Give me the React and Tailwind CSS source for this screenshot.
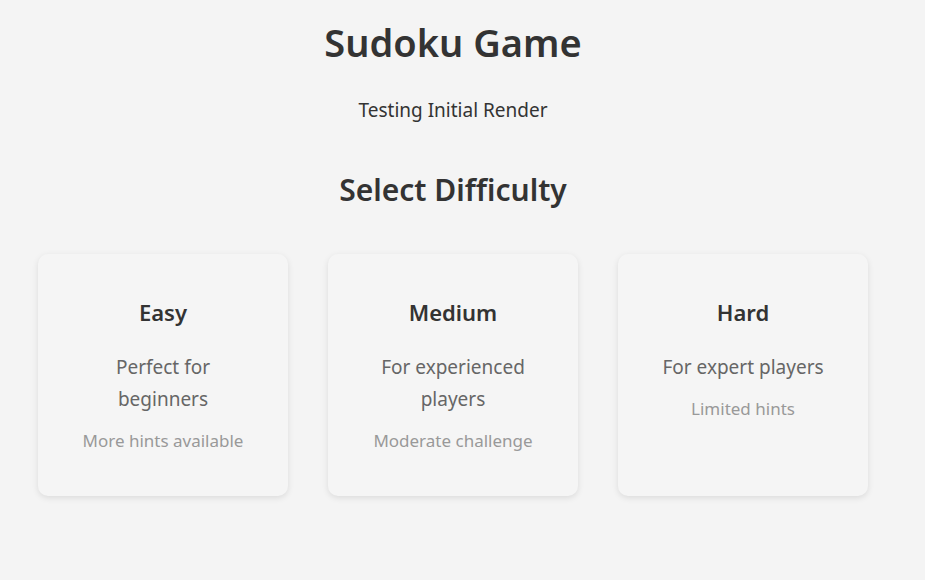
const levels = [
  { name: 'Easy', desc: 'Perfect for beginners', hint: 'More hints available' },
  { name: 'Medium', desc: 'For experienced players', hint: 'Moderate challenge' },
  { name: 'Hard', desc: 'For expert players', hint: 'Limited hints' },
];

const App = () => {
  return (
    <div className="min-h-screen bg-[#f4f4f4] text-[#333] font-['Noto_Sans',sans-serif]">
      <div className="w-[906px] pt-[18px] flex flex-col items-center">
        <h1 className="text-[38px] leading-[48px] font-semibold">Sudoku Game</h1>
        <p className="mt-[30px] text-[19px] leading-[28px]">Testing Initial Render</p>
        <h2 className="mt-[48px] text-[30px] leading-[36px] font-semibold">Select Difficulty</h2>

        <div className="mt-[46px] grid grid-cols-3 gap-[40px]">
          {levels.map((lvl) => (
            <button
              key={lvl.name}
              className="w-[250px] h-[242px] bg-[#f5f5f5] rounded-[10px] shadow-[0_2px_6px_rgba(0,0,0,0.1)] px-[32px] pt-[42px] flex flex-col items-center text-center"
            >
              <h3 className="text-[22px] leading-[32px] font-semibold text-[#333]">{lvl.name}</h3>
              <p className="mt-[23px] text-[19px] leading-[32px] text-[#666]">{lvl.desc}</p>
              <p className="mt-[14px] text-[17px] leading-[24px] text-[#999]">{lvl.hint}</p>
            </button>
          ))}
        </div>
      </div>
    </div>
  );
};

export default App;
